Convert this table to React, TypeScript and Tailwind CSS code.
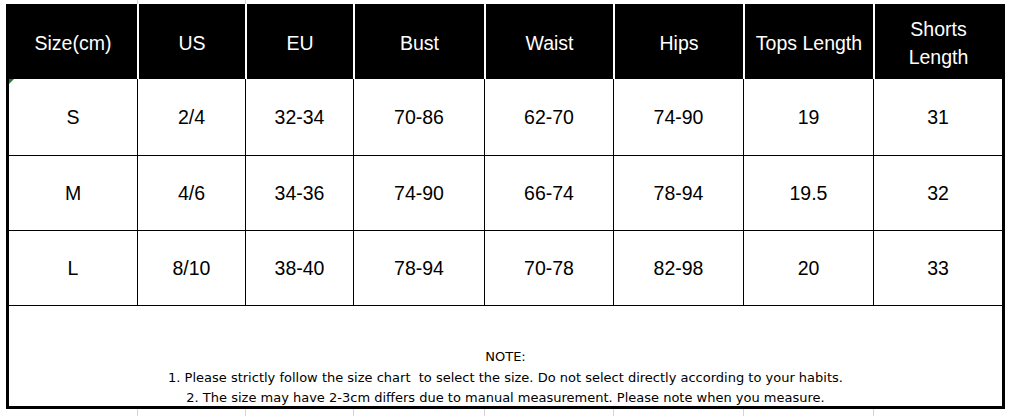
import React from 'react';

const headers = ['Size(cm)', 'US', 'EU', 'Bust', 'Waist', 'Hips', 'Tops Length', 'Shorts Length'];

const rows = [
  ['S', '2/4', '32-34', '70-86', '62-70', '74-90', '19', '31'],
  ['M', '4/6', '34-36', '74-90', '66-74', '78-94', '19.5', '32'],
  ['L', '8/10', '38-40', '78-94', '70-78', '82-98', '20', '33'],
];

const cols = 'grid grid-cols-[128px_108px_108px_131px_129px_130px_130px_129px]';

export default function App() {
  return (
    <div className="w-[1011px] h-[416px] bg-white overflow-hidden font-['Liberation_Sans',Arial,sans-serif]">
      {/* faint spreadsheet gridlines above the table */}
      <div className="h-[4px] ml-[9px] flex">
        <div className="w-[128px]" />
        <div className="w-[108px] border-l border-[#d4d4d4]" />
        <div className="flex-1 border-l border-[#d4d4d4]" />
      </div>

      <div className="ml-[6px] w-[999px] border-x-[3px] border-b-[3px] border-black">
        <div className={`${cols} bg-black h-[75px] text-white text-[19.5px] leading-[28px]`}>
          {headers.map((h, i) => (
            <div
              key={h}
              className={`flex items-center justify-center text-center pt-[2px] ${i > 0 ? 'border-l-2 border-white' : ''}`}
            >
              {h === 'Shorts Length' ? (
                <span>
                  Shorts
                  <br />
                  Length
                </span>
              ) : (
                h
              )}
            </div>
          ))}
        </div>

        {rows.map((r, ri) => (
          <div
            key={r[0]}
            className={`${cols} ${ri === 0 ? 'h-[76px]' : 'h-[75px] border-t border-black'} text-black text-[19.5px]`}
          >
            {r.map((c, i) => (
              <div
                key={i}
                className={`relative flex items-center justify-center pt-[2px] ${i > 0 ? 'border-l border-black' : ''}`}
              >
                {ri === 0 && i === 0 && (
                  <span className="absolute left-0 top-0 w-0 h-0 border-t-[5px] border-r-[5px] border-t-[#1e7b34] border-r-transparent" />
                )}
                {c}
              </div>
            ))}
          </div>
        ))}

        <div className="border-t border-black h-[101px] flex flex-col justify-end items-center text-[13px] leading-[20px] text-black font-['DejaVu_Sans',sans-serif]">
          <div className="-mb-[2px] flex flex-col items-center">
            <div className="-translate-y-[1px]">NOTE:</div>
            <div>1. Please strictly follow the size chart&nbsp; to select the size. Do not select directly according to your habits.</div>
            <div>2. The size may have 2-3cm differs due to manual measurement. Please note when you measure.</div>
          </div>
        </div>
      </div>

      <div className="h-[7px] ml-[9px] flex">
        <div className="w-[128px]" />
        <div className="w-[108px] border-l border-[#d4d4d4]" />
        <div className="w-[108px] border-l border-[#d4d4d4]" />
        <div className="w-[131px] border-l border-[#d4d4d4]" />
        <div className="w-[129px] border-l border-[#d4d4d4]" />
        <div className="w-[130px] border-l border-[#d4d4d4]" />
        <div className="w-[130px] border-l border-[#d4d4d4]" />
        <div className="w-[129px] border-l border-[#d4d4d4]" />
      </div>
    </div>
  );
}
